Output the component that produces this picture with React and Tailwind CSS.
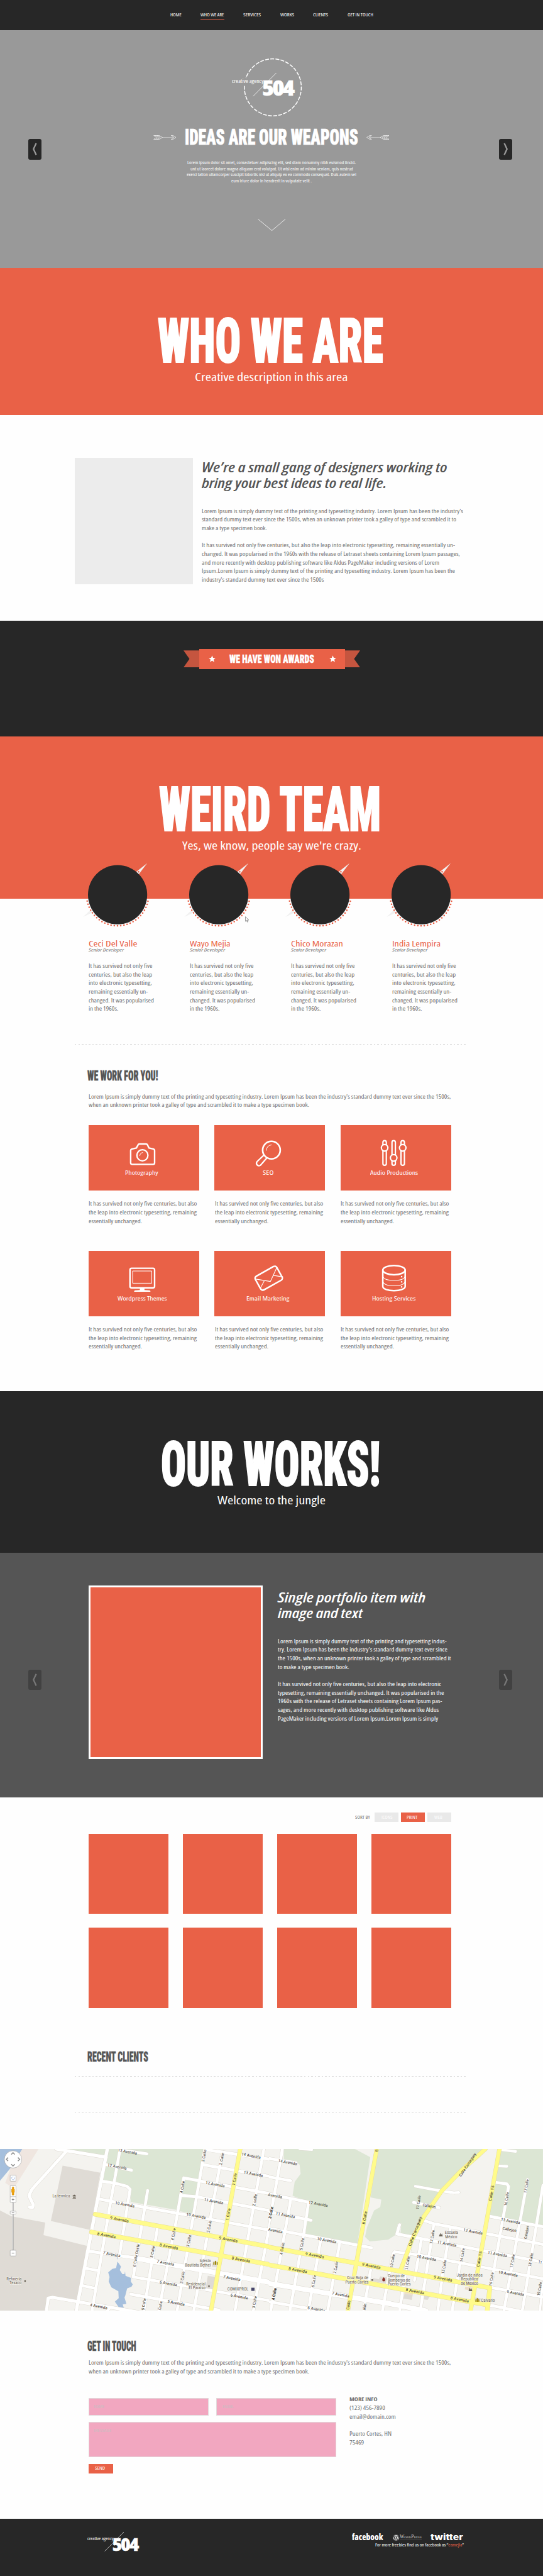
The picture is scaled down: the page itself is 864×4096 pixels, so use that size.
import { useLayoutEffect, useRef } from 'react';
import { FaWordpress } from 'react-icons/fa';

/* One line of text, condensed or widened to an exact measure. */
function Fit({ w, className = '', children }) {
  const ref = useRef(null);
  useLayoutEffect(() => {
    const el = ref.current;
    el.style.transform = 'none';
    const natural = el.getBoundingClientRect().width;
    const wanted = el.parentElement.getBoundingClientRect().width;
    if (natural) el.style.transform = `scaleX(${wanted / natural})`;
  }, [w]);
  return (
    <span className={'block shrink-0 ' + className} style={{ width: w }}>
      <span ref={ref} className="block w-max origin-left whitespace-nowrap">{children}</span>
    </span>
  );
}

function Lines({ items, className = '', line = '' }) {
  return (
    <div className={className}>
      {items.map(([text, w], i) =>
        text ? <Fit key={i} w={w} className={line}>{text}</Fit> : <div key={i} className="h-[13.67px]" />
      )}
    </div>
  );
}

const COPY = 'text-[8.7px] leading-[13.67px]';
const HEAD = 'font-["Roboto_Condensed","Roboto",sans-serif] font-black [font-stretch:75%] [-webkit-text-stroke:0.02em_currentColor]';

function SectionTitle({ w, className = '', children }) {
  return <Fit w={w} className={`ml-[139.4px] text-[21.4px] leading-[22px] text-[#555] ${HEAD} ${className}`}>{children}</Fit>;
}

function Dashes({ className = '' }) {
  return <div className={'ml-[119px] h-px w-[625px] bg-[repeating-linear-gradient(90deg,#d8d8d8_0_2.5px,transparent_2.5px_5.53px)] ' + className} />;
}

function Banner({ title, titleW, left, sub, subW, className = '' }) {
  return (
    <section className={'pt-[72.1px] text-white ' + className}>
      <div className={left}>
        <Fit w={titleW} className={`text-[98.5px] leading-[90px] ${HEAD}`}>{title}</Fit>
      </div>
      <Fit w={subW} className="mx-auto text-[18.5px] leading-[22.6px]">{sub}</Fit>
    </section>
  );
}

function LogoMark({ className = '' }) {
  return (
    <div className={'relative h-[37px] w-[99px] text-white ' + className}>
      <svg className="absolute inset-0" width="99" height="38" viewBox="0 0 99 38">
        <path d="M70.5 0 33.6 37.1" stroke="currentColor" strokeWidth="0.8" />
      </svg>
      <Fit w={50.4} className="absolute left-[0.2px] top-[8.2px] text-[8.7px] leading-[10px]">creative agency</Fit>
      <Fit w={49.6} className="absolute left-[48.4px] top-[6.4px] text-[34px] font-extrabold leading-[34px] tracking-[-2.2px] [-webkit-text-stroke:0.6px_currentColor]">504</Fit>
    </div>
  );
}

function FletchedArrow({ flip }) {
  return (
    <svg width="36.6" height="7" viewBox="0 0 36.6 7" fill="none" stroke="#fff" strokeWidth="0.7" className={'shrink-0 ' + (flip ? '-scale-x-100' : '')}>
      <path d="M14 3.5H31" stroke="#c4c4c4" strokeWidth="0.9" />
      <path d="M0.6 0.4H9.4L14.4 3.5 9.4 6.6H0.6L4.8 3.5ZM3.5 0.4 8 3.5 3.5 6.6M6.4 0.4 11 3.5 6.4 6.6" />
      <path d="M28.4 0.4H31.2L36 3.5 31.2 6.6H28.4L32.6 3.5Z" />
    </svg>
  );
}

function Pager({ next, className = '' }) {
  return (
    <button className={'absolute flex h-[32.2px] w-[21.4px] items-center justify-center rounded-[3px] ' + className}>
      <svg width="9" height="20" viewBox="0 0 9 20" fill="none" stroke="currentColor" strokeWidth="2.3" className={next ? '-scale-x-100' : ''}>
        <path d="M6.6 0.8 2.3 10 6.6 19.2" />
      </svg>
    </button>
  );
}

const NAV = [['HOME', 17.7], ['WHO WE ARE', 37.4], ['SERVICES', 28.1], ['WORKS', 22], ['CLIENTS', 24.2], ['GET IN TOUCH', 41]];

function Header() {
  return (
    <header className="h-[47.6px] bg-[#272727] pt-[18.7px]">
      <nav className="ml-[271px] flex gap-[30.5px] text-[7px] leading-[10px] text-white">
        {NAV.map(([label, w], i) => (
          <a key={label} className={i === 1 ? 'border-b border-[#e96147] pb-[1.3px]' : ''}>
            <Fit w={w}>{label}</Fit>
          </a>
        ))}
      </nav>
    </header>
  );
}

function Hero() {
  return (
    <section className="relative h-[378.2px] bg-[#999] pt-[44.4px] text-white">
      <div className="relative ml-[369px] h-[93px] w-[112px] pt-[24px]">
        <svg className="absolute inset-0" width="112" height="94" viewBox="0 0 112 94" fill="none" stroke="#fff">
          <path d="M19.9 44.6A45.3 45.3 0 1 0 22.4 31.9" strokeWidth="1.5" strokeDasharray="6.1 2.1" />
        </svg>
        <LogoMark />
      </div>
      <div className="ml-[243.9px] mt-[15.2px] flex h-9 items-center">
        <FletchedArrow />
        <Fit w={275.8} className={`ml-[13.8px] mr-[13px] text-[35.4px] leading-[36px] ${HEAD}`}>IDEAS ARE OUR WEAPONS</Fit>
        <FletchedArrow flip />
      </div>
      <Lines
        className="mt-[17.6px] text-[6.7px] leading-[9.85px]"
        line="mx-auto"
        items={[
          ['Lorem ipsum dolor sit amet, consectetuer adipiscing elit, sed diam nonummy nibh euismod tincid-', 268.3],
          ['unt ut laoreet dolore magna aliquam erat volutpat. Ut wisi enim ad minim veniam, quis nostrud', 259],
          ['exerci tation ullamcorper suscipit lobortis nisl ut aliquip ex ea commodo consequat. Duis autem vel', 269.8],
          ['eum iriure dolor in hendrerit in vulputate velit .', 128],
        ]}
      />
      <svg className="ml-[410px] mt-[55px]" width="45" height="20" viewBox="0 0 45 20" fill="none" stroke="#fff" strokeWidth="0.8">
        <path d="M0.6 0.4 22.6 18.6 44.2 0.4" />
      </svg>
      <Pager className="left-[44.6px] top-[173.8px] bg-[#272727] text-[#999]" />
      <Pager next className="left-[793.5px] top-[173.8px] bg-[#272727] text-[#999]" />
    </section>
  );
}

function About() {
  return (
    <section className="flex h-[326.8px] gap-[13.8px] pl-[119px] pt-[67.3px]">
      <div className="h-[201.1px] w-[187.9px] shrink-0 bg-[#ececec]" />
      <div className="pt-[3.4px]">
        <Lines
          className="text-[21px] font-semibold italic leading-[24.8px] text-[#555]"
          items={[['We’re a small gang of designers working to', 390.6], ['bring your best ideas to real life.', 294.3]]}
        />
        <Lines
          className={'mt-[26px] text-[#707070] ' + COPY}
          items={[
            ["Lorem Ipsum is simply dummy text of the printing and typesetting industry. Lorem Ipsum has been the industry's", 416],
            ['standard dummy text ever since the 1500s, when an unknown printer took a galley of type and scrambled it to', 405],
            ['make a type specimen book.', 103.8],
            ['', 0],
            ['It has survived not only five centuries, but also the leap into electronic typesetting, remaining essentially un-', 403],
            ['changed. It was popularised in the 1960s with the release of Letraset sheets containing Lorem Ipsum passages,', 411],
            ['and more recently with desktop publishing software like Aldus PageMaker including versions of Lorem', 378],
            ['Ipsum.Lorem Ipsum is simply dummy text of the printing and typesetting industry. Lorem Ipsum has been the', 403],
            ["industry's standard dummy text ever since the 1500s", 194.3],
          ]}
        />
      </div>
    </section>
  );
}

function Star() {
  return (
    <svg width="11" height="11" viewBox="0 0 24 24" fill="#fff" className="shrink-0">
      <path d="M12 0.600 15.400 8.600 23.600 9.300 17.400 14.900 19.300 23.200 12 18.800 4.700 23.200 6.600 14.900 0.400 9.300 8.600 8.600Z" />
    </svg>
  );
}

function Awards() {
  return (
    <section className="h-[184.1px] bg-[#272727] pt-[44.8px]">
      <div className="ml-[292px] flex items-center">
        <div className="h-[26.9px] w-[25px] bg-[#c5553f] [clip-path:polygon(0_0,100%_0,100%_100%,0_100%,38%_50%)]" />
        <div className="flex h-[31.7px] w-[232px] items-center bg-[#e96147] pl-[14.9px] text-white">
          <Star />
          <Fit w={135} className={`ml-[21.9px] mr-[24.7px] text-[17.6px] leading-[18px] ${HEAD}`}>WE HAVE WON AWARDS</Fit>
          <Star />
        </div>
        <div className="h-[26.9px] w-[24px] bg-[#c5553f] [clip-path:polygon(0_0,100%_0,60%_50%,100%_100%,0_100%)]" />
      </div>
    </section>
  );
}

const TEAM = [['Ceci Del Valle', 77.6], ['Wayo Mejia', 64.5], ['Chico Morazan', 82.8], ['India Lempira', 77.2]];

function Team() {
  return (
    <section className="h-[232.8px] pt-px">
      <div className="relative -mt-[58.6px] ml-[132px] flex">
        {TEAM.map(([name, w]) => (
          <div key={name} className="w-[160.9px]">
            <svg className="block" width="108" height="104" viewBox="0 0 108 104">
              <path d="M0.200 87 12.400 75.500 15 80Z" fill="#f1f1f1" />
              <path d="M102.200 1.600 84.500 15.500 88.500 19.500Z" fill="#f1f1f1" />
              <circle cx="55.100" cy="51.700" r="47.100" fill="#272727" />
              <circle cx="55.100" cy="51.700" r="49.400" fill="none" stroke="#e96147" strokeWidth="2.600" strokeLinecap="round" strokeDasharray="0 5.173" />
            </svg>
            <div className="ml-[9px] mt-[17.6px]">
              <Fit w={w} className="text-[13.3px] font-medium leading-[14px] text-[#e96147]">{name}</Fit>
              <Fit w={56} className="text-[7.2px] italic leading-[7.2px] text-[#707070]">Senior Developer</Fit>
              <Lines
                className={'mt-[16.2px] text-[#707070] ' + COPY}
                items={[
                  ['It has survived not only five', 101.4],
                  ['centuries, but also the leap', 101.2],
                  ['into electronic typesetting,', 100.8],
                  ['remaining essentially un-', 94.2],
                  ['changed. It was popularised', 103.9],
                  ['in the 1960s.', 47.4],
                ]}
              />
            </div>
          </div>
        ))}
        <svg className="absolute left-[257.6px] top-[86.5px]" width="7" height="10" viewBox="0 0 7 10">
          <path d="M0.600 0.600V8L2.300 6.400 3.500 9.200 4.600 8.700 3.500 6H5.800Z" fill="#fff" stroke="#333" strokeWidth="0.500" />
        </svg>
      </div>
      <Dashes className="mt-[48.2px]" />
    </section>
  );
}

const ICONS = {
  camera: (
    <>
      <path strokeWidth="2.4" d="M68.500 38.200 76 36.300 78.700 31.400Q79.300 30 80.800 30H91.500Q93 30 93.600 31.400L96 36.300 103.500 38.200Q105 38.800 105 40.500V60Q105 62.400 102.600 62.400H69.400Q66.900 62.400 66.900 60V40.500Q66.900 38.800 68.500 38.200Z" />
      <circle cx="85.600" cy="48" r="8.800" strokeWidth="2.3" />
      <path strokeWidth="1" d="M81.500 48.600Q81.800 44.200 86 43.600" />
    </>
  ),
  search: (
    <>
      <circle cx="90.900" cy="39.800" r="14" strokeWidth="2.600" />
      <path strokeWidth="1" d="M82.700 40.200Q83.200 32.400 90.900 31.400" />
      <path strokeWidth="2.200" d="M78.300 48.300 67.800 58.300A4 4 0 0 0 73.300 63.900L83.100 52.800" />
    </>
  ),
  sliders: (
    <g strokeWidth="2.200">
      {[[70, 36.1], [84.4, 52.1], [98.8, 36.1]].map(([x, y]) => (
        <g key={x}>
          <rect x={x - 2.7} y="24.700" width="5.400" height="39.200" rx="2.700" />
          <circle cx={x} cy={y} r="5.200" fill="#e96147" />
        </g>
      ))}
    </g>
  ),
  monitor: (
    <>
      <rect x="65.800" y="27.600" width="39.200" height="31.200" rx="2.600" strokeWidth="2.400" />
      <rect x="70.400" y="32" width="30" height="19.400" strokeWidth="1" />
      <path stroke="none" fill="#fff" d="M81.500 59.500H88.900V62.200L97 62.700Q98.600 63.200 98.400 65H72.400Q72.200 63.200 73.800 62.700L81.500 62.200Z" />
    </>
  ),
  mail: (
    <>
      <rect x="67.100" y="30.900" width="39" height="25" rx="4" strokeWidth="2.500" transform="rotate(-29.200 86.600 43.400)" />
      <path strokeWidth="1.100" d="M64.600 44.600 89.300 48.600 99.200 27M79.800 47 73.200 59.600M93.800 38.900 109 41.400" />
    </>
  ),
  database: (
    <>
      <ellipse cx="84.900" cy="30.600" rx="17.800" ry="7.300" strokeWidth="2.500" />
      <path strokeWidth="2.500" d="M67.100 30.600V56.500C67.100 60.500 75 63.200 84.900 63.200S102.700 60.500 102.700 56.500V30.600" />
      <path strokeWidth="1.100" d="M67.100 40C68 44.500 75 47 84.900 47S101.800 44.500 102.700 40M67.100 48.300C68 52.800 75 55.300 84.900 55.300S101.800 52.800 102.700 48.300" />
      <g fill="#fff" stroke="none">
        <circle cx="97.100" cy="41" r="1.200" /><circle cx="97.100" cy="49.200" r="1.200" /><circle cx="97.100" cy="57.300" r="1.200" />
      </g>
    </>
  ),
};

const SERVICES = [
  ['Photography', 52.7, 'camera'], ['SEO', 17.4, 'search'], ['Audio Productions', 76.2, 'sliders'],
  ['Wordpress Themes', 78.6, 'monitor'], ['Email Marketing', 68.4, 'mail'], ['Hosting Services', 69.4, 'database'],
];

const INTRO = [
  ["Lorem Ipsum is simply dummy text of the printing and typesetting industry. Lorem Ipsum has been the industry's standard dummy text ever since the 1500s,", 576.4],
  ['when an unknown printer took a galley of type and scrambled it to make a type specimen book.', 351],
];

function Services() {
  return (
    <section className="h-[550.3px] pt-[39.1px]">
      <SectionTitle w={112.4}>WE WORK FOR YOU!</SectionTitle>
      <Lines className={'ml-[141.1px] mt-[15.1px] text-[#707070] ' + COPY} items={INTRO} />
      <div className="ml-[140.8px] mt-[24.3px] grid grid-cols-[176px_176px_176px] gap-x-[24.6px] gap-y-[39.5px]">
        {SERVICES.map(([label, w, icon]) => (
          <div key={label}>
            <div className="h-[103.9px] bg-[#e96147] text-white">
              <svg className="block" width="176" height="69.800" viewBox="0 0 176 69.800" fill="none" stroke="#fff" strokeLinejoin="round" strokeLinecap="round">
                {ICONS[icon]}
              </svg>
              <div className="w-[170px]">
                <Fit w={w} className="mx-auto text-[9.3px] leading-[12px]">{label}</Fit>
              </div>
            </div>
            <Lines
              className={'ml-[0.3px] mt-[15.2px] text-[#707070] ' + COPY}
              items={[
                ['It has survived not only five centuries, but also', 172.4],
                ['the leap into electronic typesetting, remaining', 172],
                ['essentially unchanged.', 85.200],
              ]}
            />
          </div>
        ))}
      </div>
    </section>
  );
}

function Portfolio() {
  return (
    <section className="relative flex h-[388.7px] gap-[24.8px] bg-[#555] pl-[141px] pt-[51.8px] text-white">
      <div className="h-[276.3px] w-[276.7px] shrink-0 border-[3px] border-white bg-[#e96147]" />
      <div className="pt-[7.3px]">
        <Lines
          className="text-[21px] font-semibold italic leading-[24.5px]"
          items={[['Single portfolio item with', 235.2], ['image and text', 135]]}
        />
        <Lines
          className={'mt-[26.3px] ' + COPY}
          items={[
            ['Lorem Ipsum is simply dummy text of the printing and typesetting indus-', 268.600],
            ["try. Lorem Ipsum has been the industry's standard dummy text ever since", 270],
            ['the 1500s, when an unknown printer took a galley of type and scrambled it', 275.500],
            ['to make a type specimen book.', 113.500],
            ['', 0],
            ['It has survived not only five centuries, but also the leap into electronic', 260],
            ['typesetting, remaining essentially unchanged. It was popularised in the', 264.500],
            ['1960s with the release of Letraset sheets containing Lorem Ipsum pas-', 261.500],
            ['sages, and more recently with desktop publishing software like Aldus', 256.200],
            ['PageMaker including versions of Lorem Ipsum.Lorem Ipsum is simply', 255.100],
          ]}
        />
      </div>
      <Pager className="left-[44.6px] top-[185.6px] bg-[#414141] text-[#777]" />
      <Pager next className="left-[793.5px] top-[185.6px] bg-[#414141] text-[#777]" />
    </section>
  );
}

function Works() {
  return (
    <section className="h-[558.8px] pt-[24.3px]">
      <div className="ml-[565.3px] flex h-[15.2px] items-center text-[6.8px] leading-[10px]">
        <Fit w={23.700} className="mr-[7.2px] text-[#707070]">SORT BY</Fit>
        <button className="mr-[3.4px] flex h-full w-[38px] items-center bg-[#e9e9e9] pl-[11px] text-white"><Fit w={17.600}>ICONS</Fit></button>
        <button className="mr-[4.3px] flex h-full w-[38.500px] items-center bg-[#e96147] pl-[9.4px] text-white"><Fit w={17.100}>PRINT</Fit></button>
        <button className="flex h-full w-[38px] items-center bg-[#e9e9e9] pl-[11px] text-white"><Fit w={12.700}>WEB</Fit></button>
      </div>
      <div className="ml-[141px] mt-[18.8px] grid grid-cols-[127.3px_127.3px_127.3px_127.3px] gap-x-[22.6px] gap-y-[22.2px]">
        {[0, 1, 2, 3, 4, 5, 6, 7].map((i) => <div key={i} className="h-[127.1px] bg-[#e96147]" />)}
      </div>
      <SectionTitle w={97} className="mt-[67.4px]">RECENT CLIENTS</SectionTitle>
      <Dashes className="mt-[18.7px]" />
      <Dashes className="mt-[57.4px]" />
    </section>
  );
}

/* Map geometry is kept on two sheets, left and right, each 1568 units wide. */
const LEFT = {
  fills: [
    ['#a5bfdd', '0,33 128,33 60,200 0,310'],
    ['#efe6e0', '128,33 220,33 90,350 60,360 30,330 60,200'],
    ['#dfdbd5', '357,178 572,240 515,740 290,662'],
    ['#dfdbd5', '0,570 65,620 258,675 248,785 495,878 440,1370 280,1330 255,1446 0,1446'],
    ['#dce6d4', '400,33 1165,33 1140,300 1045,285 1010,565 745,495 745,375 660,330 585,310 608,110 390,50'],
    ['#dce6d4', '1045,300 1140,320 1095,595 1020,575'],
    ['#dfdbd5', '1215,1010 1245,1020 1235,1065 1208,1060'],
    ['#dfdbd5', '1185,1140 1228,1150 1212,1258 1173,1250'],
    ['#a5bfdd', '670,1015 690,1060 683,1090 698,1125 710,1125 713,1100 716,1140 747,1158 746,1190 757,1215 750,1235 725,1250 715,1310 710,1330 721,1385 700,1390 707,1425 680,1420 655,1365 677,1335 675,1275 635,1240 620,1190 625,1150 617,1110 640,1080 662,1072'],
    ['#a5bfdd', '668,970 672,1000 666,985'],
  ],
  roads: [
    [5.4, '612,33 435,1446'], [4.6, '683,50 628,520 525,1446'], [4.6, '585,315 660,333 725,360 742,385 738,420 680,975'],
    [4.6, '842,395 760,1150 1568,1365'], [4.6, '897,730 820,1446'], [4.6, '1140,312 1048,285 1000,700 905,1446'], [4.6, '1168,33 1010,1446'],
    [4.6, '1268,60 1105,1446'], [4.6, '1505,33 1340,1446'], [4.6, '1568,440 1545,640 1445,1446'], [4, '1568,1290 1550,1446'],
    [4.6, '683,40 838,75'], [5.2, '320,33 605,105'], [5, '380,50 182,385 165,440 190,520 185,545 168,540'], [4.6, '608,170 750,218'],
    [4.8, '565,470 1568,750'], [4.8, '1030,438 1120,450 1568,580'], [4.8, '1140,312 1568,430'], [4.8, '1155,170 1568,280'], [4.8, '1180,40 1568,130'],
    [5, '505,925 780,985'], [8, '780,988 1568,1205'], [4.8, '745,1300 1250,1440'], [5, '265,1446 275,1335 300,1328 800,1460'],
    [4.6, '490,1075 560,1095'], [4.6, '470,1225 545,1250'], [4, '628,1420 610,1446'],
  ],
  major: [[6, '1370,33 1203,1446'], [6.6, '543,603 1568,895'], [6.6, '522,758 1568,1050']],
  across: [
    ['13 Avenida', 727, 55, 31], ['12 Avenida', 668, 187, 31], ['14 Avenida', 1432, 92, 31], ['13 Avenida', 1445, 250, 31], ['12 Avenida', 1227, 340, 31],
    ['11 Avenida', 1219, 488, 31], ['10 Avenida', 712, 516, 31], ['10 Avenida', 1118, 617, 31], ['9 Avenida', 681, 647, 30], ['9 Avenida', 1302, 822, 30],
    ['8 Avenida', 607, 786, 30], ['8 Avenida', 963, 884, 30], ['8 Avenida', 1374, 998, 30], ['7 Avenida', 637, 952, 28], ['7 Avenida', 944, 1027, 28],
    ['7 Avenida', 1322, 1160, 28], ['6 Avenida', 960, 1206, 28], ['6 Avenida', 1364, 1320, 28], ['5 Avenida', 1004, 1376, 28], ['4 Avenida', 563, 1406, 28],
  ],
  up: [
    ['3 Calle', 1163, 92], ['2 Calle', 1264, 118], ['1 Calle', 1337, 298], ['1 Calle', 1301, 603], ['4 Calle', 1040, 365], ['4 Calle', 989, 778], ['2 calle', 1453, 480],
    ['3 Calle', 1545, 588], ['3 Calle', 1077, 835], ['3 Calle', 1040, 1155], ['3 Calle', 1452, 1370], ['2 Calle', 1193, 710], ['6 Calle Oeste', 777, 962, 37],
    ['5 Calle', 870, 930], ['5 Calle', 820, 1388], ['Calle', 914, 1400, 14], ['4 Calle', 1562, 1300],
  ],
  places: [
    ['La termica', 349, 444, 28], ['Refineria', 80, 1167, 24], ['Texaco', 88, 1203, 19], ['Iglesia', 1170, 1011, 17.5], ['Bautista Bethel', 1128, 1047, 41],
    ['Residencial', 1117, 1209, 31], ['El Paraiso', 1124, 1247, 26.5], ['COMIXPROL', 1357, 1257, 33.5],
  ],
};

const RIGHT = {
  fills: [
    ['#dce6d4', '90,33 495,33 583,105 510,860 215,780 230,500 140,440 152,320 186,250 180,170 160,145 90,130'],
    ['#dce6d4', '625,33 1235,33 990,400 885,640 820,790 755,790 760,682 740,685 725,785 685,825 580,840 553,800 565,715 605,570 640,540 646,475 585,455'],
    ['#dce6d4', '1330,33 1568,33 1568,710 1260,615'],
    ['#dfdbd5', '640,1145 682,1155 670,1205 590,1185 600,1160 632,1170'],
    ['#dfdbd5', '778,1295 825,1305 820,1350 772,1340'], ['#efe2c8', '780,1280 828,1290 825,1308 776,1298'],
    ['#dfdbd5', '890,1305 925,1315 910,1350 885,1345'], ['#ecdcc6', '1125,1235 1165,1243 1160,1268 1122,1258'],
    ['#dfdbd5', '1180,1328 1215,1338 1210,1362 1175,1352'],
  ],
  roads: [
    [4.6, '82,33 40,400 0,720'], [4.6, '130,470 15,1446'], [4.6, '230,510 205,760 125,1446'], [4.6, '300,830 230,1446'], [4.6, '408,860 340,1446'], [4.6, '585,1090 545,1446'],
    [4.6, '1568,1165 860,958 722,930 712,950 652,1446'], [4.6, '820,820 790,1050 750,1446'], [4.6, '875,820 835,1180'], [4.6, '945,690 930,850 868,1446'], [4.6, '1040,720 1000,1080 968,1446'],
    [4.6, '1110,900 1050,1446'], [4.6, '1300,325 1362,338 1372,360 1340,640 1270,1240'], [4.6, '1480,300 1345,1446'], [4.6, '1568,350 1450,1446'], [3.6, '1568,1200 1550,1446'],
    [4.8, '0,115 160,155'], [4.6, '0,275 130,310'], [4.8, '0,425 240,500'], [4.8, '0,580 245,655'], [4.8, '0,725 590,895'], [8, '0,1205 700,1385 900,1446'], [4.8, '0,1365 330,1450'],
    [4.8, '875,650 945,685 1568,865'], [4.8, '750,695 735,775 870,815 1568,1020'], [4.800, '1265,1240 1568,1325'], [4.8, '1260,1395 1440,1450'],
    [4.8, '1260,620 1568,712'], [4.2, '840,358 990,400 1060,415 1088,412'], [4.600, '830,500 975,545'], [4.2, '1310,180 1362,185'], [4.2, '1330,40 1412,54'], [3.6, '180,33 250,40'],
  ],
  major: [
    [6, '620,33 455,1446'], [6, '1320,33 1155,1446'], [6, '1240,33 1100,225 990,400 890,620 820,830 755,1095'], [6.6, '0,888 1265,1245 1250,1446'], [6.6, '0,1043 1255,1395'],
  ],
  across: [
    ['14 Avenida', 112, 148, 30], ['Avenida', 40, 441, 23], ['12 Avenida', 286, 512, 31], ['11 Avenida', 99, 610, 31], ['Avenida', 42, 745, 23], ['10 Avenida', 335, 829, 31],
    ['9 Avenida', 266, 960, 30], ['8 Avenida', 170, 1090, 30], ['9 Avenida', 589, 1053, 30], ['8 Avenida', 838, 1274, 30], ['9 Avenida', 998, 1164, 30], ['8 Avenida', 1093, 1346, 30],
    ['7 Avenida', 414, 1304, 28], ['6 Avenida', 275, 1430, 28], ['12 Avenida', 1169, 753, 31], ['11 Avenida', 1020, 859, 31], ['11 Avenida', 1308, 950, 31], ['10 Avenida', 903, 984, 31],
    ['10 Avenida', 1369, 1121, 31], ['9 Avenida', 1411, 1290, 28], ['13 Avenida', 1383, 661, 31], ['Callejon', 1377, 735, 22.500], ['Callejon', 919, 529, 21], ['11', 1552, 1019, 6],
  ],
  up: [
    ['3 Calle', 16, 588], ['4 Calle', 80, 903], ['5 Calle', 193, 864], ['6 Calle', 260, 1188], ['7 Calle', 386, 1068], ['4 Calle', 36, 1298], ['8 Calle', 551, 633, 21], ['Calle', 458, 1396, 15],
    ['10 Calle', 709, 1010, 22], ['11 Calle', 795, 1028, 22], ['11 Calle', 857, 500, 22], ['12 Calle', 936, 800, 22], ['13 Calle', 1003, 1062, 22], ['14 Calle', 1107, 960, 22],
    ['Calle 15', 1274, 420, 25], ['Calle 15', 1205, 995, 25], ['16 Calle', 1360, 470, 22], ['16 Calle', 1274, 1170, 22], ['17 Calle', 1473, 357, 22], ['17 Calle', 1394, 1010, 22],
    ['18 Calle', 1498, 1000, 22], ['Callejon', 1474, 762, 21], ['19 Calle', 1548, 1255, 22], ['alle', 550, 1410, 11], ['8', 619, 48, 4],
  ],
  places: [
    ['Escuela', 1046, 762, 21], ['México', 1044, 798, 19], ['Cruz Roja de', 511, 1158, 34], ['Puerto Cortes', 507, 1194, 37], ['Cuerpo de', 731, 1140, 27], ['Bomberos de', 746, 1176, 35.500],
    ['Puerto Cortes', 748, 1212, 36.500], ['Jardin de niños', 1150, 1134, 41], ['Republica', 1149, 1170, 27], ['de Mexico', 1149, 1206, 27.500], ['Calvario', 1254, 1353, 22],
  ],
};

const KX = 0.27899;
const KY = 0.18219;

function Roads({ list, color, extra = 0 }) {
  return list.map(([w, pts], i) => (
    <polyline key={i} points={pts} fill="none" stroke={color} strokeWidth={w + extra} strokeLinejoin="round" strokeLinecap="round" vectorEffect="non-scaling-stroke" />
  ));
}

function Sheet({ data, x }) {
  return (
    <g transform={`translate(${x} 0) scale(${KX} ${KY}) translate(0 -33)`}>
      {data.fills.map(([c, p], i) => <polygon key={i} points={p} fill={c} />)}
      <Roads list={data.roads} color="#dad6cd" extra={0.9} />
      <Roads list={data.roads} color="#fff" />
      <Roads list={data.major} color="#e3d9a0" extra={0.9} />
      <Roads list={data.major} color="#fffb8b" />
    </g>
  );
}

function Label({ x, y, rot = 0, len, size, color = '#3a352c', halo, children }) {
  return (
    <text
      transform={`translate(${x} ${y}) rotate(${rot})`} textAnchor="middle" dy="0.360em" fontSize={size} fill={color} textLength={len} lengthAdjust="spacingAndGlyphs"
      stroke={halo || 'none'} strokeWidth={halo ? 1.4 : 0} strokeOpacity="0.8" paintOrder="stroke" strokeLinejoin="round"
    >
      {children}
    </text>
  );
}

function SheetLabels({ data, x }) {
  const px = (v) => x + v * KX;
  const py = (v) => (v - 33) * KY;
  return (
    <g>
      {data.across.map(([t, a, b, len], i) => <Label key={i} x={px(a)} y={py(b)} rot={10.500} len={len} size={6.3}>{t}</Label>)}
      {data.up.map(([t, a, b, len = 19.500], i) => <Label key={i} x={px(a)} y={py(b)} rot={-80} len={len} size={5.8}>{t}</Label>)}
      {data.places.map(([t, a, b, len], i) => <Label key={i} x={px(a)} y={py(b)} len={len} size={6.300} color="#6b6357" halo="#f4f3ef">{t}</Label>)}
    </g>
  );
}

function CityMap() {
  return (
    <svg className="block font-['Roboto',sans-serif]" width="864" height="257.400" viewBox="0 0 864 257.400">
      <rect width="864" height="257.400" fill="#f4f3ef" />
      <svg x="0" y="0" width="428" height="257.400" viewBox="0 0 428 257.400"><Sheet data={LEFT} x={0} /></svg>
      <svg x="428" y="0" width="436" height="257.400" viewBox="428 0 436 257.400"><Sheet data={RIGHT} x={426.5} /></svg>
      <SheetLabels data={LEFT} x={0} />
      <SheetLabels data={RIGHT} x={426.5} />
      <Label x={744} y={25} rot={-56} len={44} size={6.200}>Calle Camaguey</Label>
      <Label x={660.500} y={131} rot={-69} len={50} size={6.200}>Calle Camaguey</Label>
      <g fill="#6b6357">
        <path d="M115.500 74.500 118.200 72.500 120.900 74.500V75.200H115.500ZM116 75.700H117.200V77.700H116ZM117.700 75.700H118.800V77.700H117.700ZM119.300 75.700H120.400V77.700H119.300ZM115.500 78H120.900V78.700H115.500Z" />
        <rect x="38.700" y="208.800" width="2.400" height="2.400" /><rect x="331.300" y="217" width="2.400" height="2.400" /><rect x="591" y="207" width="2.600" height="2.600" />
        <path d="M698.500 139 700.500 133.500 702 137 703.200 134 704.500 139ZM745.500 226 747.300 220.500 749 224 750.200 221.500 751.500 226Z" />
      </g>
      <rect x="399.800" y="220.600" width="5.200" height="5" fill="#46466a" />
      <path d="M339.500 184V180.500L341 179.500V184ZM341.800 184V179L343 177.500 344.200 179V184ZM345 184V179.500L346.300 180.500V184ZM756.500 243V239.500L757.800 238.500V243ZM758.500 243V238L759.500 236.800 760.600 238V243ZM761.300 243V238.500L762.600 239.500V243Z" fill="#9b8400" />
      <path d="M608.500 209.500Q607.500 206.500 610.500 204 613.500 206.500 612.800 209.500Q610.700 211.300 608.500 209.500Z" fill="#8c2f25" />
      <g stroke="#9a9a9a" strokeWidth="0.600" fill="#fff">
        <circle cx="20.700" cy="16.600" r="13.800" />
        <rect x="16.200" y="41.700" width="9.200" height="9.600" rx="1" />
        <rect x="16.200" y="58.300" width="9.200" height="26.800" rx="1" />
        <rect x="19.900" y="85.100" width="1.500" height="76" />
        <rect x="16.200" y="98.900" width="9.200" height="4.600" rx="0.800" />
        <rect x="16.200" y="161" width="9.200" height="9.200" rx="1" />
        <path d="M16.200 75.800H25.400" />
      </g>
      <g fill="none" stroke="#8f8f8f" strokeWidth="1.500">
        <path d="M17.900 8.700 20.700 5.900 23.500 8.700M17.900 24.300 20.700 27.100 23.500 24.300M12.900 13.600 10.100 16.400 12.900 19.200M28.500 13.600 31.300 16.400 28.500 19.200" />
      </g>
      <path d="M18.700 80.500H22.700M20.700 78.500V82.500M18.700 101.200H22.700M18.700 165.600H22.700" stroke="#777" strokeWidth="0.900" />
      <circle cx="20.800" cy="46.600" r="2.300" fill="none" stroke="#6b93d6" strokeWidth="0.900" strokeDasharray="0.900 0.900" />
      <path d="M20.700 60.200a1.500 1.500 0 0 1 .9 2.700L23 64V69H22.200V73.200H19.200V69H18.400V64L19.800 62.900A1.500 1.500 0 0 1 20.700 60.200Z" fill="#f0a30a" stroke="#b87400" strokeWidth="0.400" />
    </svg>
  );
}

function Contact() {
  return (
    <section className="h-[331.3px] pt-[45.5px]">
      <SectionTitle w={77.6}>GET IN TOUCH</SectionTitle>
      <Lines className={'ml-[141.1px] mt-[9.7px] text-[#707070] ' + COPY} items={INTRO} />
      <div className="ml-[141px] mt-[34.5px] flex gap-[20.6px]">
        <div className="w-[394.4px] text-[6.8px] leading-[10px] text-[#cdbcc0]">
          <div className="flex justify-between">
            <div className="flex h-[28px] w-[191.4px] items-center border border-[#e2dadc] bg-[#f2a7c0] pl-[7.3px]"><Fit w={17.100}>NAME</Fit></div>
            <div className="flex h-[28px] w-[191.8px] items-center border border-[#e2dadc] bg-[#f2a7c0] pl-[9.5px]"><Fit w={18.200}>EMAIL</Fit></div>
          </div>
          <div className="mt-[9.5px] h-[56.3px] border border-[#e2dadc] bg-[#f2a7c0] pl-[7.3px] pt-[8.4px]"><Fit w={28.100}>MESSAGE</Fit></div>
          <button className="mt-[11px] flex h-[15.2px] w-[38.5px] items-center bg-[#e96147] pl-[9.6px] text-white"><Fit w={16}>SEND</Fit></button>
        </div>
        <div className={'-mt-[3.700px] text-[#707070] ' + COPY}>
          <Fit w={44.600} className="font-bold">MORE INFO</Fit>
          <Fit w={56.700}>(123) 456-7890</Fit>
          <Fit w={73.800}>email@domain.com</Fit>
          <Fit w={67.200} className="mt-[13.67px]">Puerto Cortes, HN</Fit>
          <Fit w={23.200}>75469</Fit>
        </div>
      </div>
    </section>
  );
}

function Footer() {
  return (
    <footer className="flex h-[90.7px] bg-[#272727] text-white">
      <LogoMark className="ml-[139px] mt-[20.7px] origin-top-left scale-[0.823]" />
      <div className="ml-[321.8px] mt-[23px]">
        <div className="flex h-[13px] items-center">
          <Fit w={49.500} className="text-[13.4px] font-extrabold leading-[13px]">facebook</Fit>
          <FaWordpress className="ml-[16.2px] size-[10.4px] text-[#e4e4e4]" />
          <Fit w={34.800} className="ml-[0.6px] border-b border-[#4a4a4a] font-['Liberation_Serif',serif] text-[7.6px] leading-[8px] text-[#d6d6d6] [font-variant:small-caps]">WordPress</Fit>
          <Fit w={51.800} className="ml-[13.900px] text-[13.6px] font-extrabold leading-[13px] font-['Inter',sans-serif]">twitter</Fit>
        </div>
        <Fit w={141.100} className="ml-[36.9px] mt-[0.6px] text-[6.9px] leading-[9px]">
          For more freebies find us on facebook as “<span className="text-[#e96147]">eamejia</span>”
        </Fit>
      </div>
    </footer>
  );
}

export default function App() {
  return (
    <div className="h-[4096px] w-[864px] overflow-hidden bg-[#fefefe] font-['Open_Sans','Noto_Sans',sans-serif] [font-stretch:80%]">
      <Header />
      <Hero />
      <Banner className="h-[234.6px] bg-[#e96147]" title="WHO WE ARE" titleW={358.7} left="ml-[250.7px]" sub="Creative description in this area" subW={243.5} />
      <About />
      <Awards />
      <Banner className="h-[257.3px] bg-[#e96147]" title="WEIRD TEAM" titleW={353.1} left="ml-[252.9px]" sub="Yes, we know, people say we're crazy." subW={284.900} />
      <Team />
      <Services />
      <Banner className="h-[257.5px] bg-[#272727]" title="OUR WORKS!" titleW={349.400} left="ml-[256.2px]" sub="Welcome to the jungle" subW={171.900} />
      <Portfolio />
      <Works />
      <CityMap />
      <Contact />
      <Footer />
    </div>
  );
}
